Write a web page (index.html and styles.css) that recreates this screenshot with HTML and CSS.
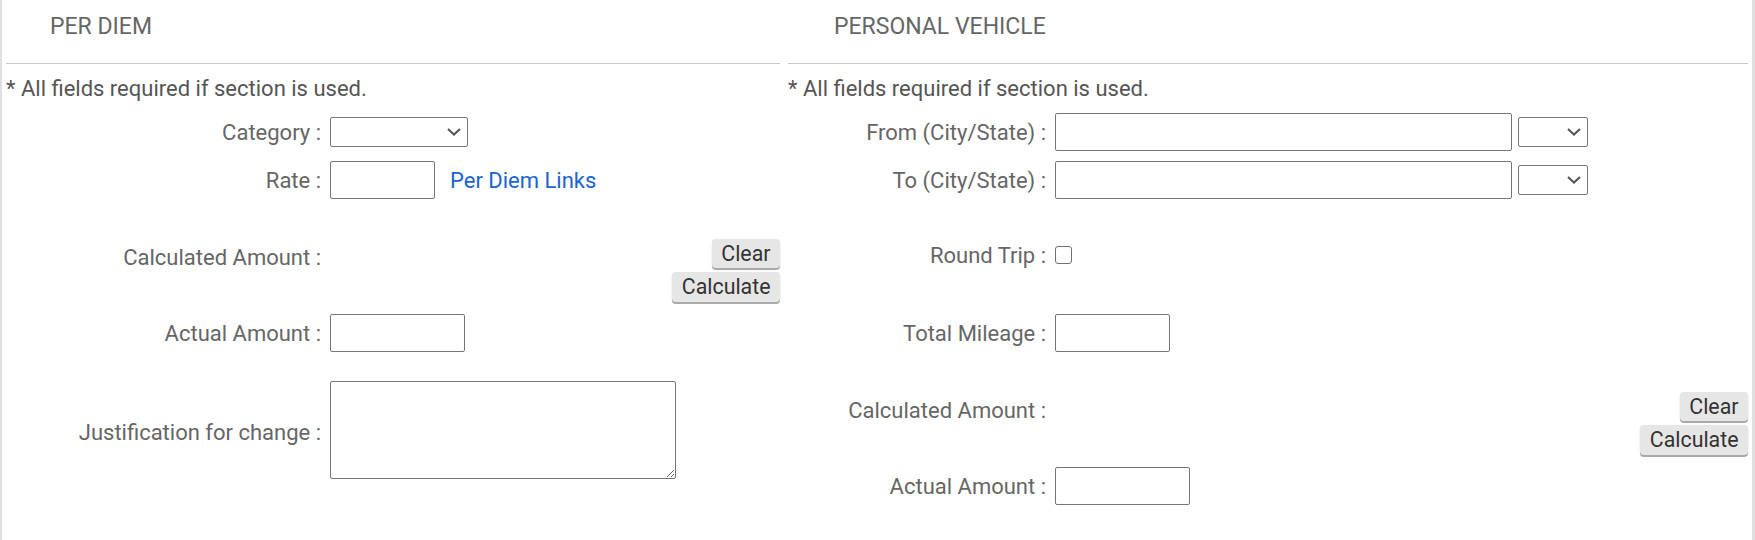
FILE: index.html
```html
<!DOCTYPE html>
<html lang="en">
<head>
<meta charset="utf-8">
<title>Travel Expenses</title>
<link rel="stylesheet" href="styles.css">
</head>
<body>
<div class="page">
  <section class="panel panel--diem">
    <h2 class="panel__title">PER DIEM</h2>
    <hr class="panel__rule">
    <p class="panel__note">* All fields required if section is used.</p>
    <div class="form">
      <div class="row">
        <label class="row__label">Category :</label>
        <div class="row__value">
          <span class="select select--category">
            <select class="select__control"><option></option></select>
            <svg class="select__arrow" width="14" height="8" viewBox="0 0 14 8"><path d="M1 1 L7 6.6 L13 1" fill="none" stroke="#555" stroke-width="2"/></svg>
          </span>
        </div>
      </div>
      <div class="row">
        <label class="row__label">Rate :</label>
        <div class="row__value">
          <input class="field field--rate" type="text">
          <a class="link" href="#">Per Diem Links</a>
        </div>
      </div>
      <div class="row row--calc">
        <label class="row__label row__label--top">Calculated Amount :</label>
        <div class="row__value row__value--buttons">
          <button class="btn" type="button">Clear</button>
          <button class="btn" type="button">Calculate</button>
        </div>
      </div>
      <div class="row">
        <label class="row__label">Actual Amount :</label>
        <div class="row__value">
          <input class="field field--amount" type="text">
        </div>
      </div>
      <div class="row row--text">
        <label class="row__label row__label--low">Justification for change :</label>
        <div class="row__value">
          <textarea class="field field--area"></textarea>
        </div>
      </div>
    </div>
  </section>

  <section class="panel panel--vehicle">
    <h2 class="panel__title">PERSONAL VEHICLE</h2>
    <hr class="panel__rule">
    <p class="panel__note">* All fields required if section is used.</p>
    <div class="form">
      <div class="row">
        <label class="row__label">From (City/State) :</label>
        <div class="row__value">
          <input class="field field--city" type="text">
          <span class="select select--state">
            <select class="select__control"><option></option></select>
            <svg class="select__arrow" width="14" height="8" viewBox="0 0 14 8"><path d="M1 1 L7 6.6 L13 1" fill="none" stroke="#555" stroke-width="2"/></svg>
          </span>
        </div>
      </div>
      <div class="row">
        <label class="row__label">To (City/State) :</label>
        <div class="row__value">
          <input class="field field--city" type="text">
          <span class="select select--state">
            <select class="select__control"><option></option></select>
            <svg class="select__arrow" width="14" height="8" viewBox="0 0 14 8"><path d="M1 1 L7 6.6 L13 1" fill="none" stroke="#555" stroke-width="2"/></svg>
          </span>
        </div>
      </div>
      <div class="row row--check">
        <label class="row__label">Round Trip :</label>
        <div class="row__value">
          <input class="check" type="checkbox">
        </div>
      </div>
      <div class="row row--after-check">
        <label class="row__label">Total Mileage :</label>
        <div class="row__value">
          <input class="field field--mileage" type="text">
        </div>
      </div>
      <div class="row row--calc">
        <label class="row__label row__label--top">Calculated Amount :</label>
        <div class="row__value row__value--buttons">
          <button class="btn" type="button">Clear</button>
          <button class="btn" type="button">Calculate</button>
        </div>
      </div>
      <div class="row">
        <label class="row__label">Actual Amount :</label>
        <div class="row__value">
          <input class="field field--amount" type="text">
        </div>
      </div>
    </div>
  </section>
</div>
</body>
</html>
```

FILE: styles.css
```css
* {
  box-sizing: border-box;
}

html,
body {
  margin: 0;
  padding: 0;
  background: #ffffff;
}

body {
  font-family: Roboto, "Liberation Sans", Arial, sans-serif;
  font-size: 22px;
  color: #666666;
}

.page {
  display: flex;
  gap: 8px;
  width: 1755px;
  height: 540px;
  padding: 0 4px;
  border-left: 2px solid #e0e0e0;
  border-right: 3px solid #e0e0e0;
  overflow: hidden;
}

.panel {
  display: flex;
  flex-direction: column;
  flex: none;
}

.panel--diem {
  width: 774px;
  --label-w: 315px;
  --label-gap: 9px;
}

.panel--vehicle {
  width: 960px;
  --label-w: 258px;
  --label-gap: 9px;
}

.panel__title {
  margin: 13px 0 0;
  font-size: 23px;
  font-weight: 400;
  line-height: 28px;
  color: #666666;
}

.panel--diem .panel__title {
  padding-left: 44px;
}

.panel--vehicle .panel__title {
  padding-left: 46px;
}

.panel__rule {
  margin: 22px 0 0;
  height: 0;
  border: 0;
  border-top: 1px solid #c9c9c9;
}

.panel__note {
  margin: 12px 0 0;
  line-height: 25px;
  color: #555555;
}

.form {
  display: flex;
  flex-direction: column;
  gap: 10px;
  margin-top: 12px;
}

.row {
  display: grid;
  grid-template-columns: var(--label-w) 1fr;
  column-gap: var(--label-gap);
  align-items: center;
  min-height: 38px;
}

.row__label {
  text-align: right;
  line-height: 25px;
  padding-top: 1px;
  white-space: nowrap;
}

.row__label--top {
  align-self: start;
  line-height: 32px;
  padding-top: 3px;
}

.row__label--low {
  padding-top: 5px;
}

.row__value {
  display: flex;
  align-items: center;
}

.row__value--buttons {
  flex-direction: column;
  align-items: flex-end;
  gap: 4px;
}

.row--calc {
  margin-top: 30px;
  margin-bottom: 2px;
  align-items: start;
}

.row--text {
  margin-top: 19px;
}

.row--check {
  margin-top: 27px;
}

.row--after-check {
  margin-top: 30px;
}

.field {
  height: 38px;
  margin: 0;
  padding: 0 4px;
  border: 1px solid #767676;
  border-radius: 2px;
  background: #ffffff;
  font: inherit;
  color: #333333;
}

.field--rate {
  width: 105px;
}

.field--amount {
  width: 135px;
}

.field--mileage {
  width: 115px;
}

.field--city {
  width: 457px;
}

.field--area {
  width: 346px;
  height: 98px;
  resize: both;
  display: block;
}

.link {
  margin-left: 15px;
  color: #1a64d4;
  text-decoration: none;
  line-height: 25px;
}

.select {
  position: relative;
  display: inline-block;
  flex: none;
}

.select--category {
  width: 138px;
}

.select--state {
  width: 70px;
  margin-left: 6px;
}

.select__control {
  display: block;
  width: 100%;
  height: 29.4px;
  margin: 0;
  padding: 0 4px;
  border: 1px solid #767676;
  border-radius: 2px;
  background: #ffffff;
  font: inherit;
  -webkit-appearance: none;
  appearance: none;
}

.select__arrow {
  position: absolute;
  right: 7px;
  top: 11px;
  pointer-events: none;
}

.check {
  width: 17.3px;
  height: 17.3px;
  margin: 0;
  border: 1.5px solid #707070;
  border-radius: 3px;
  background: #ffffff;
  -webkit-appearance: none;
  appearance: none;
}

.btn {
  margin: 0;
  padding: 2px 9.5px;
  border: 0;
  border-radius: 4px;
  background: #e6e6e6;
  box-shadow: 0 2px 0 #a9a9a9, 0 1px 2px rgba(0, 0, 0, 0.15);
  font: inherit;
  font-size: 21.33px;
  line-height: 25.4px;
  color: #333333;
  cursor: pointer;
}
```
